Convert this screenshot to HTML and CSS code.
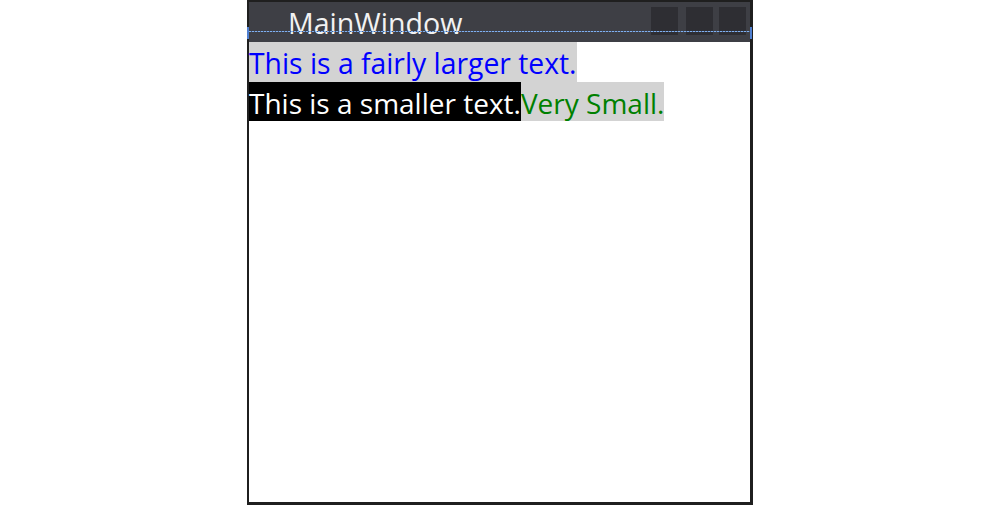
FILE: index.html
```html
<!DOCTYPE html>
<html>
<head>
<meta charset="utf-8">
<link rel="stylesheet" href="styles.css">
</head>
<body>
<div class="window">
  <div class="titlebar">
    <div class="title">MainWindow</div>
    <div class="buttons">
      <div class="btn b1"></div>
      <div class="btn b2"></div>
      <div class="btn b3"></div>
    </div>
    <div class="guide"></div>
    <div class="mark mark-left"></div>
    <div class="mark mark-right"></div>
  </div>
  <div class="content">
    <div class="row"><span class="t large">This is a fairly larger text.</span></div>
    <div class="row"><span class="t smaller">This is a smaller text.</span><span class="t small">Very Small.</span></div>
  </div>
</div>
</body>
</html>
```

FILE: styles.css
```css
html, body {
  margin: 0;
  padding: 0;
  background: #ffffff;
}
body {
  width: 1000px;
  height: 505px;
  overflow: hidden;
}
.window {
  box-sizing: border-box;
  margin-left: 247px;
  width: 506px;
  height: 505px;
  border: 2px solid #1f1f1f;
  border-right-width: 3px;
  border-bottom-width: 3px;
  background: #ffffff;
  display: flex;
  flex-direction: column;
}
.titlebar {
  position: relative;
  height: 40px;
  background: #3e3f45;
  display: flex;
  align-items: flex-start;
  font-family: "Open Sans", "Noto Sans", sans-serif;
}
.title {
  flex: 1;
  padding-left: 39px;
  padding-top: 1px;
  font-size: 28.6px;
  line-height: 40px;
  color: #f2f2f2;
}
.buttons {
  display: flex;
  padding-top: 5px;
  padding-right: 4px;
}
.btn {
  width: 27px;
  height: 28px;
  background: #2e2e33;
}
.b2 { margin-left: 8px; }
.b3 { margin-left: 6px; }
.guide {
  position: absolute;
  left: 0;
  right: 0;
  top: 29px;
  height: 1px;
  background: repeating-linear-gradient(90deg, #7fb0f0 0 2px, #4a5a78 2px 3px);
}
.mark {
  position: absolute;
  width: 2px;
  top: 25px;
  height: 12px;
  background: #4f7fd0;
}
.mark-left { left: -2px; }
.mark-right { right: -2px; }
.content {
  flex: 1;
  font-family: "Open Sans", "Noto Sans", sans-serif;
  font-size: 28px;
}
.row {
  display: flex;
}
.t {
  display: inline-block;
  height: 40px;
  line-height: 38px;
  padding-top: 2px;
  box-sizing: border-box;
  white-space: nowrap;
}
.large {
  background: #d3d3d3;
  color: #0000ff;
  font-size: 28.3px;
}
.smaller {
  background: #000000;
  color: #ffffff;
  height: 39px;
}
.small {
  background: #d3d3d3;
  color: #008000;
  height: 39px;
}
```
